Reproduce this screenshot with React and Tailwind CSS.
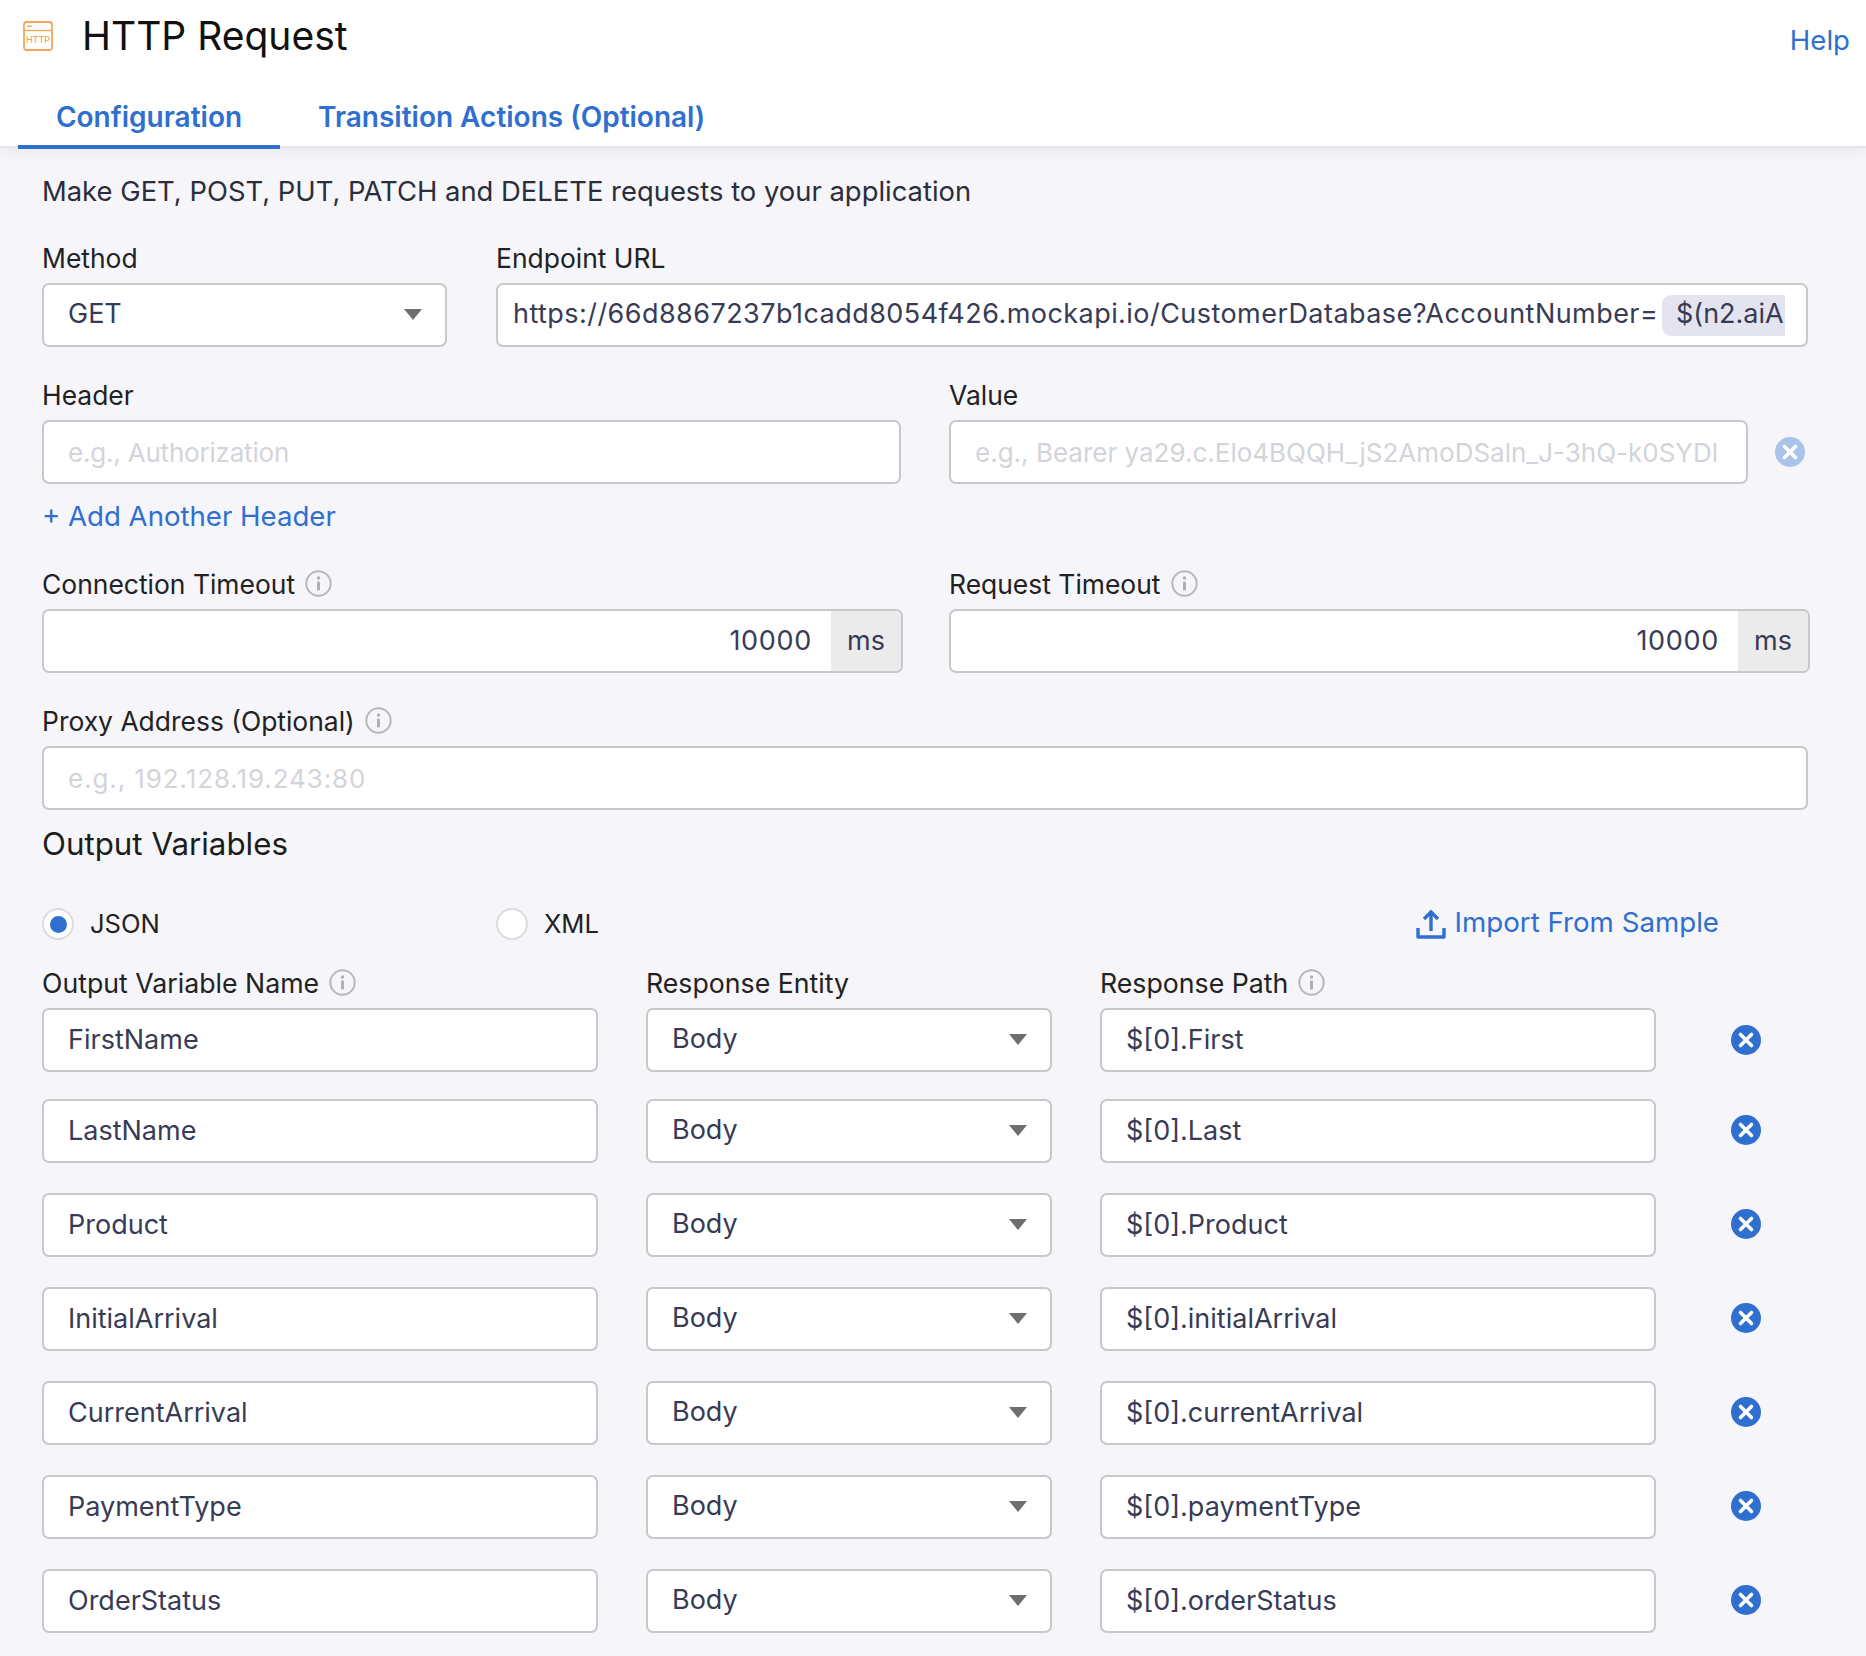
const F = "font-['Inter',sans-serif]";

function Info() {
  return (
    <svg width="27" height="27" viewBox="0 0 27 27" className="shrink-0 mt-[-2px]">
      <circle cx="13.5" cy="13.5" r="12.2" fill="none" stroke="#b8b8b8" strokeWidth="2" />
      <circle cx="13.5" cy="8" r="1.7" fill="#b0b0b0" />
      <rect x="12" y="11.5" width="3" height="9" rx="1" fill="#b0b0b0" />
    </svg>
  );
}

function Close({ color = "#2f6fcf" }) {
  return (
    <svg width="30" height="30" viewBox="0 0 30 30" className="shrink-0">
      <circle cx="15" cy="15" r="15" fill={color} />
      <path d="M9.5 9.5 L20.5 20.5 M20.5 9.5 L9.5 20.5" stroke="#fff" strokeWidth="3.6" strokeLinecap="round" />
    </svg>
  );
}

function Label({ children, info, size = "text-[26.45px]" }) {
  return (
    <div className={`h-[40px] pb-[10px] flex items-center gap-[10px] ${size} leading-[30px] text-[#222222]`}>
      <span>{children}</span>
      {info && <Info />}
    </div>
  );
}

function Box({ children, className = "" }) {
  return (
    <div className={`h-[64px] bg-white border-2 border-[#c8c8c8] rounded-[7px] flex items-center text-[27px] text-[#383b55] ${className}`}>
      {children}
    </div>
  );
}

function Select({ value }) {
  return (
    <Box className="pl-[24px] pr-[23px] justify-between">
      <span className="mt-[-2px]">{value}</span>
      <span className="mt-[-2px] w-0 h-0 border-l-[9px] border-r-[9px] border-t-[11px] border-l-transparent border-r-transparent border-t-[#6e6e6e]" />
    </Box>
  );
}

function Timeout({ label, value }) {
  return (
    <div>
      <Label info>{label}</Label>
      <div className="h-[64px] bg-white border-2 border-[#c8c8c8] rounded-[7px] flex items-stretch justify-end text-[27px] text-[#383b55] mr-[-2px]">
        <span className="self-center pr-[19px] tracking-[0.7px]">{value}</span>
        <span className="w-[70px] bg-[#ebebeb] flex items-center justify-center rounded-r-[5px]">ms</span>
      </div>
    </div>
  );
}

function Ph({ children, className = "" }) {
  return <span className={`text-[#d3d4da] text-[26px] whitespace-nowrap overflow-hidden ${className}`}>{children}</span>;
}

const rows = [
  ["FirstName", "$[0].First"],
  ["LastName", "$[0].Last"],
  ["Product", "$[0].Product"],
  ["InitialArrival", "$[0].initialArrival"],
  ["CurrentArrival", "$[0].currentArrival"],
  ["PaymentType", "$[0].paymentType"],
  ["OrderStatus", "$[0].orderStatus"],
];

export default function App() {
  return (
    <div className={`${F} w-[1866px] h-[1656px] bg-[#f5f5fa] overflow-hidden`}>
      <header className="relative h-[148px] bg-white border-b-2 border-[#e6e6e8] shadow-[0_4px_12px_rgba(0,0,0,0.05)]">
        <div className="h-[72px] flex items-center pl-[23px] pr-[16px]">
          <svg width="30" height="30" viewBox="0 0 30 30" className="shrink-0">
            <rect x="1" y="1" width="28" height="28" rx="2.5" fill="none" stroke="#f2a65a" strokeWidth="1.8" />
            <path d="M1 9.5 H29" stroke="#f2a65a" strokeWidth="1.4" />
            <path d="M4 5.2 H9" stroke="#f2a65a" strokeWidth="1.4" />
            <text x="15" y="22" fontSize="9" fontWeight="500" fill="#f2a65a" textAnchor="middle" fontFamily="Inter">HTTP</text>
          </svg>
          <h1 className="ml-[29px] text-[39px] leading-[44px] font-normal text-[#111111]">HTTP Request</h1>
          <a className="ml-auto text-[27.6px] text-[#2f6fcf] mt-[9px]">Help</a>
        </div>
        <nav className="flex ml-[18px] text-[28px] leading-[36px] font-semibold text-[#2f6fcf] h-[77px]">
          <div className="w-[262px] h-[77px] flex justify-center border-b-[4px] border-[#2f6fcf] pt-[27px]">Configuration</div>
          <div className="ml-[38px] h-[77px] pt-[27px]">Transition Actions (Optional)</div>
        </nav>
      </header>

      <main className="pl-[42px] pr-[58px]">
        <p className="mt-[23px] h-[40px] leading-[40px] text-[27.4px] text-[#2b2d3a]">
          Make GET, POST, PUT, PATCH and DELETE requests to your application
        </p>

        <div className="mt-[32px] grid grid-cols-[405px_1312px] gap-x-[49px]">
          <div>
            <Label>Method</Label>
            <Select value="GET" />
          </div>
          <div>
            <Label>Endpoint URL</Label>
            <Box className="pl-[15px] pr-[21px] overflow-hidden whitespace-nowrap">
              <span className="min-w-0 tracking-[0.45px] mt-[-2px]">https://66d8867237b1cadd8054f426.mockapi.io/CustomerDatabase?AccountNumber=</span>
              <span className="ml-[5px] shrink-0 w-[123px] h-[41px] bg-[#e4e4f0] rounded-l-[9px] pl-[14px] pb-[2px] flex items-center overflow-hidden">$(n2.aiA</span>
            </Box>
          </div>
        </div>

        <div className="mt-[33px] grid grid-cols-[859px_799px_1fr] gap-x-[48px]">
          <div>
            <Label>Header</Label>
            <Box className="pl-[24px]"><Ph className="tracking-[-0.2px]">e.g., Authorization</Ph></Box>
          </div>
          <div>
            <Label>Value</Label>
            <Box className="px-[24px] overflow-hidden"><Ph>e.g., Bearer ya29.c.Elo4BQQH_jS2AmoDSaln_J-3hQ-k0SYDl</Ph></Box>
          </div>
          <div className="pt-[57px] ml-[-21px]">
            <Close color="#a9c3ea" />
          </div>
        </div>

        <div className="mt-[16px] h-[32px] leading-[32px] text-[27.6px] text-[#2f6fcf]">+ Add Another Header</div>

        <div className="mt-[37px] grid grid-cols-[859px_859px] gap-x-[48px] w-[1766px]">
          <Timeout label="Connection Timeout" value="10000" />
          <Timeout label="Request Timeout" value="10000" />
        </div>

        <div className="mt-[33px]">
          <Label info>Proxy Address (Optional)</Label>
          <Box className="pl-[24px]"><Ph className="tracking-[0.9px]">e.g., 192.128.19.243:80</Ph></Box>
        </div>

        <h2 className="mt-[14px] h-[40px] leading-[40px] text-[31.3px] font-normal text-[#1c1c1c]">Output Variables</h2>

        <div className="mt-[44px] h-[32px] flex items-center text-[25.6px] text-[#222222]">
          <span className="w-[32px] h-[32px] rounded-full bg-white border-2 border-[#dcdcdc] flex items-center justify-center">
            <span className="w-[17px] h-[17px] rounded-full bg-[#2f6fcf]" />
          </span>
          <span className="ml-[16px]">JSON</span>
          <span className="ml-[336px] w-[32px] h-[32px] rounded-full bg-white border-2 border-[#dcdcdc]" />
          <span className="ml-[16px]">XML</span>
          <div className="ml-auto mr-[89px] flex items-center gap-[9px] text-[#2f6fcf] text-[27.7px] mt-[-2px]">
            <svg width="30" height="30" viewBox="0 0 30 30" className="mt-[2px]">
              <path d="M2 19 V28 H28 V19" fill="none" stroke="#2f6fcf" strokeWidth="3.4" strokeLinejoin="round" />
              <path d="M15 22 V4 M8 10 L15 3 L22 10" fill="none" stroke="#2f6fcf" strokeWidth="3.4" />
            </svg>
            <span>Import From Sample</span>
          </div>
        </div>

        <div className="mt-[28px] grid grid-cols-[556px_406px_556px_60px] gap-x-[48px] w-[1722px]">
          <Label info size="text-[26.7px]">Output Variable Name</Label>
          <Label size="text-[26.7px]">Response Entity</Label>
          <Label info size="text-[26.7px]">Response Path</Label>
          <div />
        </div>
        <div className="flex flex-col gap-y-[30px]">
          {rows.map(([name, path], i) => (
            <div key={name} className={`grid grid-cols-[556px_406px_556px_60px] gap-x-[48px] w-[1722px] items-center ${i === 0 ? "mb-[-3px]" : ""}`}>
              <Box className="pl-[24px]">{name}</Box>
              <Select value="Body" />
              <Box className="pl-[24px]">{path}</Box>
              <div className={`pl-[27px] ${i === 0 ? "" : "mt-[-2px]"}`}><Close /></div>
            </div>
          ))}
        </div>
      </main>
    </div>
  );
}
